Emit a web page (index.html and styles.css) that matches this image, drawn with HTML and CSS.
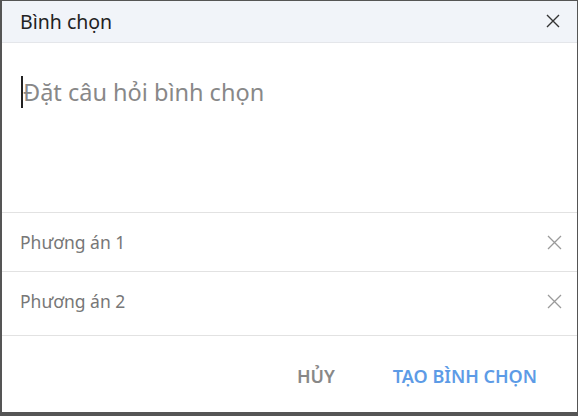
FILE: index.html
```html
<!DOCTYPE html>
<html lang="vi">
<head>
<meta charset="utf-8">
<link rel="stylesheet" href="styles.css">
</head>
<body>
<div class="dialog">
  <div class="header">
    <span class="title">Bình chọn</span>
    <svg class="close" width="14" height="14" viewBox="0 0 14 14"><path d="M1 1L13 13M13 1L1 13" stroke="#333" stroke-width="1.4" fill="none"/></svg>
  </div>
  <div class="question">
    <span class="caret"></span><span class="placeholder">Đặt câu hỏi bình chọn</span>
  </div>
  <div class="option">
    <span class="opt-text">Phương án 1</span>
    <svg class="remove" width="15" height="15" viewBox="0 0 15 15"><path d="M1 1L14 14M14 1L1 14" stroke="#9a9a9a" stroke-width="1.3" fill="none"/></svg>
  </div>
  <div class="option last">
    <span class="opt-text">Phương án 2</span>
    <svg class="remove" width="15" height="15" viewBox="0 0 15 15"><path d="M1 1L14 14M14 1L1 14" stroke="#9a9a9a" stroke-width="1.3" fill="none"/></svg>
  </div>
  <div class="footer">
    <button class="btn cancel">HỦY</button>
    <button class="btn create">TẠO BÌNH CHỌN</button>
  </div>
</div>
</body>
</html>
```
FILE: styles.css
```css
html, body {
  margin: 0;
  padding: 0;
  height: 100%;
  background: #555555;
}
body {
  padding: 1px 1px 0 2px;
  box-sizing: border-box;
  font-family: "Noto Sans", "Open Sans", sans-serif;
}
.dialog {
  background: #ffffff;
  height: 411px;
  display: flex;
  flex-direction: column;
}
.header {
  height: 41px;
  background: #f1f4f9;
  border-bottom: 1px solid #e4e6ea;
  display: flex;
  align-items: center;
  justify-content: space-between;
  padding: 0 17px 0 18px;
}
.title {
  font-size: 19.5px;
  color: #222;
}
.close {
  margin-top: -2px;
}
.question {
  height: 170px;
  border-bottom: 1px solid #e2e2e2;
  padding: 33px 0 0 19px;
  box-sizing: border-box;
  display: flex;
  align-items: flex-start;
}
.caret {
  width: 2px;
  height: 32px;
  background: #222;
}
.placeholder {
  font-size: 23.5px;
  color: #888;
  line-height: 32px;
}
.option {
  height: 58px;
  border-bottom: 1px solid #e2e2e2;
  display: flex;
  align-items: center;
  justify-content: space-between;
  padding: 0 15px 0 18px;
}
.option.last {
  height: 64px;
  box-sizing: border-box;
  padding-bottom: 5px;
}
.opt-text {
  font-size: 17.5px;
  color: #777;
}
.footer {
  flex: 1;
  display: flex;
  justify-content: flex-end;
  align-items: center;
  padding: 4px 40px 0 0;
  gap: 58px;
}
.btn {
  border: 0;
  background: none;
  padding: 0;
  font-family: "Noto Sans", "Open Sans", sans-serif;
  font-size: 18px;
  font-weight: 600;
  cursor: pointer;
}
.cancel { color: #888; }
.create { color: #5d9be6; }
```
